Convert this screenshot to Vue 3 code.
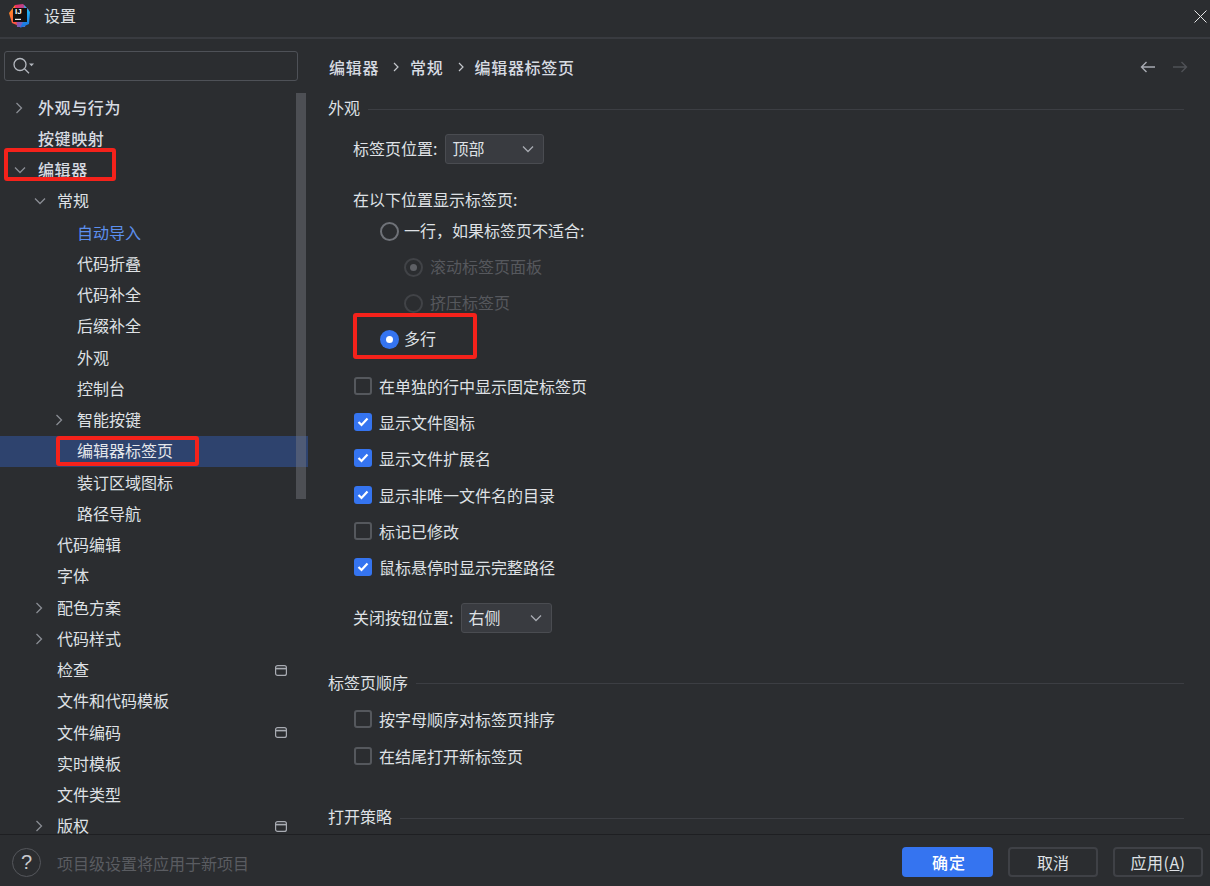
<script setup>
const tree = [
  { t: '外观与行为', l: 0, a: 'r', bold: true },
  { t: '按键映射', l: 0, bold: true },
  { t: '编辑器', l: 0, a: 'd', bold: true },
  { t: '常规', l: 1, a: 'd' },
  { t: '自动导入', l: 2, link: true },
  { t: '代码折叠', l: 2 },
  { t: '代码补全', l: 2 },
  { t: '后缀补全', l: 2 },
  { t: '外观', l: 2 },
  { t: '控制台', l: 2 },
  { t: '智能按键', l: 2, a: 'r' },
  { t: '编辑器标签页', l: 2, sel: true },
  { t: '装订区域图标', l: 2 },
  { t: '路径导航', l: 2 },
  { t: '代码编辑', l: 1 },
  { t: '字体', l: 1 },
  { t: '配色方案', l: 1, a: 'r' },
  { t: '代码样式', l: 1, a: 'r' },
  { t: '检查', l: 1, win: true },
  { t: '文件和代码模板', l: 1 },
  { t: '文件编码', l: 1, win: true },
  { t: '实时模板', l: 1 },
  { t: '文件类型', l: 1 },
  { t: '版权', l: 1, a: 'r', win: true }
]
const checks1 = [
  { t: '在单独的行中显示固定标签页', on: false },
  { t: '显示文件图标', on: true },
  { t: '显示文件扩展名', on: true },
  { t: '显示非唯一文件名的目录', on: true },
  { t: '标记已修改', on: false },
  { t: '鼠标悬停时显示完整路径', on: true }
]
const checks2 = [
  { t: '按字母顺序对标签页排序', on: false },
  { t: '在结尾打开新标签页', on: false }
]
</script>

<template>
  <div class="dialog">
    <header class="titlebar">
      <svg class="logo" width="22" height="24" viewBox="0 0 22 24">
        <defs>
          <linearGradient id="lg1" x1="0" y1="0" x2="1" y2="1">
            <stop offset="0" stop-color="#ff9a1e" />
            <stop offset="1" stop-color="#fe2857" />
          </linearGradient>
          <linearGradient id="lg2" x1="0" y1="0" x2="1" y2="1">
            <stop offset="0" stop-color="#fe2857" />
            <stop offset="1" stop-color="#2b7bf0" />
          </linearGradient>
          <linearGradient id="lg3" x1="0" y1="0" x2="0" y2="1">
            <stop offset="0" stop-color="#21c8f6" />
            <stop offset="1" stop-color="#1a6fe0" />
          </linearGradient>
        </defs>
        <path d="M0 9 L6 1 L14 3 L10 22 L3 19 Z" fill="url(#lg1)" />
        <path d="M6 1 L14 0 L20 6 L16 23 L8 23 Z" fill="url(#lg2)" />
        <path d="M15 1 L21 8 L20 20 L11 24 L17 12 Z" fill="url(#lg3)" />
        <rect x="4" y="4" width="14" height="14" fill="#111" />
        <rect x="6" y="14.800" width="6" height="1.200" fill="#eee" />
      </svg>
      <span class="logo-text">IJ</span>
      <span class="title">设置</span>
      <svg class="close" width="13" height="13" viewBox="0 0 13 13">
        <path d="M.5.5l12 12M12.500.5l-12 12" stroke="#e6e6e6" stroke-width="1" fill="none" />
      </svg>
    </header>

    <div class="main">
      <aside class="sidebar">
        <div class="search">
          <svg width="24" height="18" viewBox="0 0 24 18">
            <circle cx="7" cy="7.500" r="6" fill="none" stroke="#b4b8bf" stroke-width="1.300" />
            <path d="M11.500 11.800l4.500 4.500" stroke="#b4b8bf" stroke-width="1.300" />
            <path d="M16 6.500h5l-2.500 2.800z" fill="#b4b8bf" />
          </svg>
        </div>
        <div class="tree">
          <div
            v-for="item in tree"
            :key="item.t"
            class="row"
            :class="['l' + item.l, { sel: item.sel, bold: item.bold, link: item.link }]"
          >
            <span class="arrow">
              <svg v-if="item.a === 'r'" width="10" height="12" viewBox="0 0 10 12">
                <path d="M2.500 1l5 5-5 5" fill="none" stroke="#8a8d94" stroke-width="1.300" />
              </svg>
              <svg v-else-if="item.a === 'd'" width="12" height="10" viewBox="0 0 12 10">
                <path d="M1 2.500l5 5 5-5" fill="none" stroke="#8a8d94" stroke-width="1.300" />
              </svg>
            </span>
            <span class="label">{{ item.t }}</span>
            <svg v-if="item.win" class="win" width="12" height="11" viewBox="0 0 12 11">
              <rect x=".6" y=".6" width="10.800" height="9.800" rx="2" fill="none" stroke="#a8abb2" stroke-width="1.200" />
              <path d="M1 3.600h10" stroke="#a8abb2" stroke-width="1.600" />
            </svg>
          </div>
        </div>
        <div class="scrollbar"></div>
        <div class="mark mark-editor"></div>
        <div class="mark mark-tabs"></div>
      </aside>

      <section class="content">
        <div class="crumbs">
          <div class="crumb-text">
            <span>编辑器</span>
            <svg class="sep" width="6" height="10" viewBox="0 0 6 10"><path d="M1 1l4 4-4 4" fill="none" stroke="#c4c7cc" stroke-width="1.200" /></svg>
            <span>常规</span>
            <svg class="sep" width="6" height="10" viewBox="0 0 6 10"><path d="M1 1l4 4-4 4" fill="none" stroke="#c4c7cc" stroke-width="1.200" /></svg>
            <span>编辑器标签页</span>
          </div>
          <div class="nav">
            <svg width="16" height="12" viewBox="0 0 16 12"><path d="M15 6H1.500M6.500 1l-5 5 5 5" fill="none" stroke="#a8abb2" stroke-width="1.400" /></svg>
            <svg width="16" height="12" viewBox="0 0 16 12"><path d="M1 6h13.500M9.500 1l5 5-5 5" fill="none" stroke="#4f5156" stroke-width="1.400" /></svg>
          </div>
        </div>

        <div class="group-title first"><span>外观</span><i></i></div>

        <div class="field first-field">
          <span class="txt">标签页位置:</span>
          <div class="combo combo-a">
            <span class="txt">顶部</span>
            <svg width="12" height="8" viewBox="0 0 12 8"><path d="M1 1.500l5 5 5-5" fill="none" stroke="#a8abb2" stroke-width="1.300" /></svg>
          </div>
        </div>

        <div class="caption">在以下位置显示标签页:</div>

        <div class="radio r1"><span class="dot"></span><span class="txt">一行，如果标签页不适合:</span></div>
        <div class="radio r2 off"><span class="dot picked"></span><span class="txt">滚动标签页面板</span></div>
        <div class="radio r2 off"><span class="dot"></span><span class="txt">挤压标签页</span></div>
        <div class="radio r1 multi">
          <span class="dot active"></span><span class="txt">多行</span>
          <div class="mark mark-multi"></div>
        </div>

        <div class="checks">
          <div v-for="c in checks1" :key="c.t" class="check">
            <span class="box" :class="{ on: c.on }">
              <svg v-if="c.on" width="12" height="10" viewBox="0 0 12 10"><path d="M1.500 5l3 3 6-6.500" fill="none" stroke="#fff" stroke-width="2.200" /></svg>
            </span>
            <span>{{ c.t }}</span>
          </div>
        </div>

        <div class="field close-field">
          <span class="txt">关闭按钮位置:</span>
          <div class="combo combo-b">
            <span class="txt">右侧</span>
            <svg width="12" height="8" viewBox="0 0 12 8"><path d="M1 1.500l5 5 5-5" fill="none" stroke="#a8abb2" stroke-width="1.300" /></svg>
          </div>
        </div>

        <div class="group-title order"><span>标签页顺序</span><i></i></div>
        <div class="checks second">
          <div v-for="c in checks2" :key="c.t" class="check">
            <span class="box"></span>
            <span>{{ c.t }}</span>
          </div>
        </div>
        <div class="group-title open"><span>打开策略</span><i></i></div>
      </section>
    </div>

    <footer class="footer">
      <div class="help">?</div>
      <span class="hint">项目级设置将应用于新项目</span>
      <div class="buttons">
        <button class="btn primary">确定</button>
        <button class="btn">取消</button>
        <button class="btn apply">应用(<u>A</u>)</button>
      </div>
    </footer>
  </div>
</template>

<style scoped>
.dialog {
  width: 1210px;
  height: 886px;
  display: flex;
  flex-direction: column;
  background: #2b2d30;
  color: #dfe1e5;
  font-family: "Noto Sans CJK SC", "Noto Sans", sans-serif;
  font-size: 16px;
  overflow: hidden;
}
.titlebar {
  height: 37px;
  flex: none;
  border-bottom: 2px solid #393b40;
  display: flex;
  align-items: center;
  position: relative;
  padding-left: 9px;
}
.logo { flex: none; margin-top: -5px; }
.logo-text {
  position: absolute;
  left: 15px;
  top: 7px;
  font: bold 8px/10px "Liberation Sans", sans-serif;
  color: #fff;
}
.title { margin-left: 13px; line-height: 20px; margin-top: -7px; color: #dfe1e5; }
.close { margin-left: auto; margin-right: 3px; margin-top: -5px; }
.main { flex: 1; min-height: 0; display: flex; overflow: hidden; }

.sidebar {
  width: 308px;
  flex: none;
  position: relative;
  padding-top: 12px;
  overflow: hidden;
}
.search {
  margin-left: 4px;
  width: 294px;
  height: 30px;
  box-sizing: border-box;
  border: 1px solid #4e5157;
  border-radius: 3px;
  display: flex;
  align-items: center;
  padding-left: 8px;
}
.tree { margin-top: 11px; }
.row {
  height: 31.250px;
  display: flex;
  align-items: center;
  line-height: 20px;
  color: #dfe1e5;
}
.label { padding-bottom: 2px; }
.txt { padding-bottom: 2px; }
.row.l0 { padding-left: 0; }
.row.l1 { padding-left: 19px; }
.row.l2 { padding-left: 39px; }
.row.bold { font-weight: 500; letter-spacing: .6px; color: #d7dbe2; }
.row.link { color: #5c8fee; }
.row.sel { background: #2e436e; color: #e4e6ea; }
.arrow {
  width: 38px;
  flex: none;
  display: flex;
  align-items: center;
  justify-content: flex-start;
  padding-left: 14px;
  box-sizing: border-box;
}
.row.l1 .arrow, .row.l2 .arrow { padding-left: 15px; }
.win { margin-left: auto; margin-right: 21px; flex: none; }
.scrollbar {
  position: absolute;
  left: 296px;
  top: 54px;
  width: 10px;
  height: 406px;
  background: rgba(120, 122, 128, .45);
}
.mark {
  position: absolute;
  border: 4px solid #f5221b;
  border-radius: 3px;
  box-sizing: border-box;
  pointer-events: none;
}
.mark-editor { left: 4px; top: 109px; width: 112px; height: 33px; }
.mark-tabs { left: 56px; top: 397px; width: 143px; height: 30px; }

.content {
  flex: 1;
  min-width: 0;
  padding: 0 26px 0 20px;
  overflow: hidden;
}
.crumbs {
  height: 30px;
  margin-top: 13px;
  display: flex;
  align-items: center;
  justify-content: space-between;
  padding-left: 1px;
}
.crumb-text {
  display: flex;
  align-items: center;
  gap: 12px;
  font-weight: 500;
  letter-spacing: .7px;
  color: #d7dbe2;
  line-height: 20px;
}
.sep { margin: 0 -1px 0 2px; }
.nav { display: flex; gap: 16px; margin-right: -4px; }
.group-title {
  display: flex;
  align-items: center;
  gap: 8px;
  height: 20px;
  color: #dfe1e5;
}
.group-title.first { margin-top: 15px; }
.group-title i { flex: 1; height: 1px; background: #3c3e43; margin-top: 4px; }
.field {
  display: flex;
  align-items: center;
  height: 30px;
  padding-left: 25px;
  gap: 8px;
}
.first-field { margin-top: 17px; }
.combo {
  height: 30px;
  box-sizing: border-box;
  background: #393b40;
  border: 1px solid #4a4c51;
  border-radius: 3px;
  display: flex;
  align-items: center;
  justify-content: space-between;
  padding: 0 9px 0 6px;
}
.combo-a { width: 99px; }
.combo-b { width: 91px; }
.caption { margin-top: 25px; padding-left: 25px; line-height: 20px; }
.radio {
  height: 36px;
  display: flex;
  align-items: center;
  gap: 5px;
  position: relative;
}
.caption + .radio { margin-top: 4px; }
.r1 { padding-left: 52px; }
.r2 { padding-left: 76px; gap: 7px; }
.off { color: #56585d; }
.dot {
  width: 19px;
  height: 19px;
  box-sizing: border-box;
  border-radius: 50%;
  border: 2px solid #6f7278;
  flex: none;
  display: flex;
  align-items: center;
  justify-content: center;
}
.off .dot { border-color: #414347; }
.picked::after {
  content: "";
  width: 7px;
  height: 7px;
  border-radius: 50%;
  background: #5e6065;
}
.dot.active { background: #3574f0; border: none; }
.dot.active::after {
  content: "";
  width: 7px;
  height: 7px;
  border-radius: 50%;
  background: #fff;
}
.mark-multi { left: 25px; top: -8px; width: 124px; height: 46px; }
.checks { margin-top: 10.500px; }
.check {
  height: 36.300px;
  display: flex;
  align-items: center;
  gap: 7px;
  padding-left: 26px;
}
.box {
  width: 18px;
  height: 18px;
  box-sizing: border-box;
  border: 2px solid #55585d;
  border-radius: 3px;
  flex: none;
  display: flex;
  align-items: center;
  justify-content: center;
}
.box.on { background: #3574f0; border: none; }
.close-field { margin-top: 17.500px; }
.group-title.order { margin-top: 39px; }
.checks.second { margin-top: 9px; }
.checks.second .check { height: 37px; }
.group-title.open { margin-top: 31.600px; }

.footer {
  height: 52px;
  flex: none;
  border-top: 1px solid #1e1f22;
  display: flex;
  align-items: center;
  box-sizing: border-box;
  padding: 3px 0 0 12px;
}
.help {
  width: 29px;
  height: 29px;
  box-sizing: border-box;
  border: 1px solid #55575c;
  border-radius: 50%;
  display: flex;
  align-items: center;
  justify-content: center;
  color: #c8cace;
  font: 20px/1 "Liberation Sans", sans-serif;
}
.hint { margin-left: 16px; margin-top: 1px; color: #5a5c61; line-height: 20px; }
.buttons { margin-left: auto; margin-right: 7px; display: flex; gap: 15px; }
.btn {
  width: 90px;
  height: 30px;
  box-sizing: border-box;
  background: transparent;
  border: 2px solid #3f4146;
  border-radius: 4px;
  color: #dfe1e5;
  font: inherit;
  line-height: 20px;
  padding: 0;
}
.btn.apply { letter-spacing: .5px; }
.btn.primary {
  width: 91px;
  background: #3574f0;
  border: none;
  color: #fff;
  font-weight: 500;
  letter-spacing: 1px;
  padding-left: 3px;
}
</style>

<style>
html, body { margin: 0; background: #2b2d30; }
</style>
